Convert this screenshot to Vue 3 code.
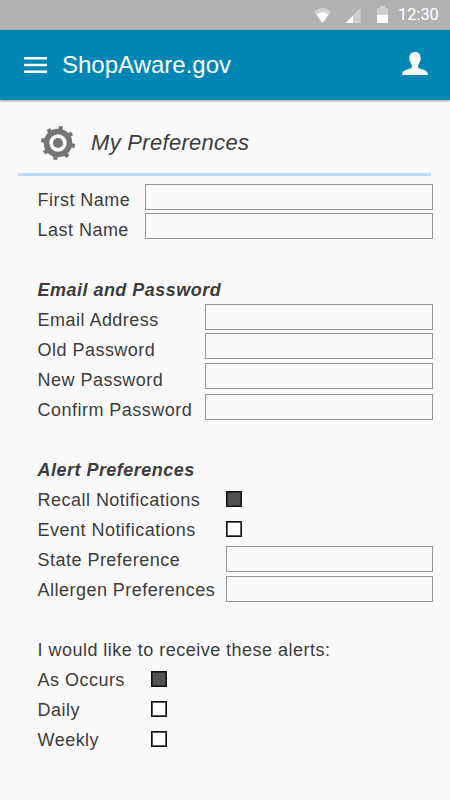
<script setup>
import { ref } from 'vue'

const names = ref([
  { label: 'First Name', value: '' },
  { label: 'Last Name', value: '', tight: true },
])
const account = ref([
  { label: 'Email Address', type: 'email', value: '' },
  { label: 'Old Password', type: 'password', value: '', tight: true },
  { label: 'New Password', type: 'password', value: '', tight: true },
  { label: 'Confirm Password', type: 'password', value: '' },
])
const alerts = ref([
  { label: 'Recall Notifications', checked: true },
  { label: 'Event Notifications', checked: false },
])
const filters = ref([
  { label: 'State Preference', value: '' },
  { label: 'Allergen Preferences', value: '' },
])
const frequency = ref([
  { label: 'As Occurs', checked: true },
  { label: 'Daily', checked: false },
  { label: 'Weekly', checked: false },
])
const teeth = [0, 45, 90, 135, 180, 225, 270, 315]
</script>

<template>
  <div class="screen">
    <div class="status">
      <svg class="wifi" viewBox="0 0 18 16"><path d="M9 16 0 4Q9-4 18 4Z" fill="#d2d2d2" /><path d="M9 16 2.6 7.2Q9 2 15.4 7.2Z" fill="#fff" /></svg>
      <svg class="signal" viewBox="0 0 16 16"><path d="M0 16 16 0V16Z" fill="#cfcfcf" /><path d="M0 16 8 8V16Z" fill="#fff" /></svg>
      <svg class="battery" viewBox="0 0 11 17"><path d="M3 0H8V2H10Q11 2 11 3V9H0V3Q0 2 1 2H3Z" fill="#cfcfcf" /><path d="M0 9H11V16Q11 17 10 17H1Q0 17 0 16Z" fill="#fff" /></svg>
      <span class="clock">12:30</span>
    </div>
    <header class="bar">
      <svg class="menu" viewBox="0 0 23 16"><path d="M0 1.3H23M0 8H23M0 14.7H23" stroke="#fff" stroke-width="2.4" /></svg>
      <span class="brand">ShopAware.gov</span>
      <svg class="user" viewBox="0 0 26 23"><path d="M13 0C9.2 0 7.3 2.5 7.5 6C7.2 6.2 7.2 7 7.5 8.2C7.7 9.3 8.1 9.4 8.4 9.6C8.7 11.7 9.5 12.8 9.9 13.4V15.2C9.1 17.2 1.6 17.6.5 20.4L0 23H26L25.5 20.4C24.4 17.6 16.9 17.2 16.1 15.2V13.4C16.5 12.8 17.3 11.7 17.6 9.6C17.9 9.4 18.3 9.3 18.5 8.2C18.8 7 18.8 6.2 18.5 6C18.7 2.5 16.8 0 13 0Z" fill="#fff" /></svg>
    </header>
    <main class="content">
      <div class="title">
        <svg class="gear" viewBox="-18 -18 36 36">
          <g fill="#757575"><path v-for="t in teeth" :key="t" d="M-2-17H2L2.3-12H-2.3Z" :transform="`rotate(${t + 10})`" /></g>
          <circle r="11.5" fill="none" stroke="#757575" stroke-width="5.6" />
          <circle r="5" fill="#757575" />
        </svg>
        <h1>My Preferences</h1>
      </div>
      <form class="form" @submit.prevent>
        <section class="names">
          <label v-for="f in names" :key="f.label" class="row" :class="{ tight: f.tight }">
            <span class="label">{{ f.label }}</span><input v-model="f.value" class="field" type="text" />
          </label>
        </section>
        <section class="account">
          <h2>Email and Password</h2>
          <label v-for="f in account" :key="f.label" class="row" :class="{ tight: f.tight }">
            <span class="label">{{ f.label }}</span><input v-model="f.value" class="field" :type="f.type" />
          </label>
        </section>
        <section class="alerts">
          <h2>Alert Preferences</h2>
          <label v-for="f in alerts" :key="f.label" class="row">
            <span class="label">{{ f.label }}</span><input v-model="f.checked" class="check" type="checkbox" />
          </label>
          <label v-for="f in filters" :key="f.label" class="row low">
            <span class="label">{{ f.label }}</span><input v-model="f.value" class="field" type="text" />
          </label>
        </section>
        <section class="frequency">
          <p>I would like to receive these alerts:</p>
          <label v-for="f in frequency" :key="f.label" class="row">
            <span class="label">{{ f.label }}</span><input v-model="f.checked" class="check" type="checkbox" />
          </label>
        </section>
      </form>
    </main>
  </div>
</template>

<style>
body { margin: 0; background: #fafafa; }
</style>

<style scoped>
.screen { width: 450px; height: 800px; overflow: hidden; background: #fafafa; color: #3c3c3c; font-family: "Liberation Sans", Arial, sans-serif; }
svg { display: block; flex: none; }
.status { display: flex; align-items: center; height: 30px; box-sizing: border-box; padding-left: 314px; background: #b2b2b2; color: #fff; }
.wifi { width: 17px; height: 15px; }
.signal { width: 16px; height: 15px; margin-left: 14px; }
.battery { width: 11px; height: 17px; margin-left: 16px; margin-top: -1px; }
.clock { margin-left: 10px; font: 16.4px/30px Roboto, sans-serif; white-space: nowrap; }
.bar { display: flex; align-items: center; height: 70px; box-sizing: border-box; padding: 0 22px 0 24px; background: #0086b5; color: #fff; box-shadow: 0 1px 2px rgba(0, 0, 0, .4); }
.menu { width: 23px; height: 16px; }
.brand { margin-left: 15px; font-size: 24px; line-height: 70px; }
.user { width: 26px; height: 23px; margin: -3px 0 0 auto; }
.content { padding: 0 18px; }
.title { display: flex; align-items: center; height: 76px; box-sizing: border-box; margin-right: 1px; padding: 13px 0 0 22px; border-bottom: 3px solid #b9dbfd; }
.gear { width: 36px; height: 36px; }
h1 { margin: 0 0 0 15px; font-size: 22px; line-height: 36px; font-weight: 400; font-style: italic; letter-spacing: .3px; }
.form { padding: 9px 0 0 19.5px; }
section { margin-bottom: 30px; }
h2, p, .row { margin: 0; height: 30px; font-size: 18px; line-height: 30px; letter-spacing: .48px; white-space: nowrap; }
h2 { font-weight: 700; font-style: italic; }
.row { display: flex; }
.label { flex: none; width: 107.5px; }
.account .label { width: 167.5px; }
.alerts .label { width: 188px; }
.frequency .label { width: 113.5px; }
.field { flex: 1; min-width: 0; height: 26px; box-sizing: border-box; margin: -1px -1px 0 0; padding: 0 6px; border: 1px solid #969696; border-radius: 0; background: #fafafa; font: inherit; color: inherit; outline: none; }
.tight .field { margin-top: -2px; }
.low .field { margin-top: 1px; }
.check { appearance: none; width: 16px; height: 16px; box-sizing: border-box; margin: 6px 0 0; border: 1px solid #111; background: #fff; box-shadow: inset 0 0 0 1px #5a5a5a; }
.check:checked { background: #505252; box-shadow: inset 0 0 0 1px #2c2e2e; }
</style>
